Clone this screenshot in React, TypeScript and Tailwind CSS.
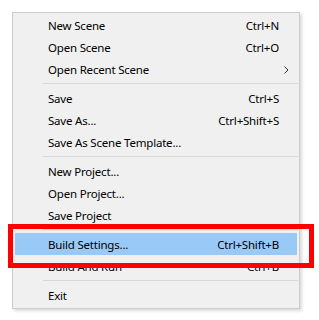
import React from "react";

type Item = { label: string; shortcut?: string; arrow?: boolean; active?: boolean } | "sep";

const items: Item[] = [
  { label: "New Scene", shortcut: "Ctrl+N" },
  { label: "Open Scene", shortcut: "Ctrl+O" },
  { label: "Open Recent Scene", arrow: true },
  "sep",
  { label: "Save", shortcut: "Ctrl+S" },
  { label: "Save As...", shortcut: "Ctrl+Shift+S" },
  { label: "Save As Scene Template..." },
  "sep",
  { label: "New Project..." },
  { label: "Open Project..." },
  { label: "Save Project" },
  "sep",
  { label: "Build Settings...", shortcut: "Ctrl+Shift+B", active: true },
  { label: "Build And Run", shortcut: "Ctrl+B" },
  "sep",
  { label: "Exit" },
];

export default function App() {
  return (
    <div
      className="relative w-[319px] h-[320px] bg-white overflow-hidden"
      style={{ fontFamily: '"Segoe UI", "Noto Sans", sans-serif' }}
    >
      <div className="absolute left-0 top-0 pl-[12px] pt-[12px]">
        <div className="w-[288px] bg-[#f0f0f0] border border-[#cccccc] pt-[1px] pb-[2px] shadow-[2px_2px_3px_rgba(0,0,0,0.15)]">
          {items.map((it, i) =>
            it === "sep" ? (
              <div key={i} className="h-[7px] flex items-center ml-[30px] mr-[1px]">
                <div className="h-px w-full bg-[#d7d7d7]" />
              </div>
            ) : (
              <div
                key={i}
                className={
                  "h-[22px] mx-[2px] flex items-center pl-[33px] pr-[18px] pt-[1px] text-[11.5px] tracking-[-0.2px] text-black " +
                  (it.active ? "bg-[#99c9f7]" : "")
                }
              >
                <span className="flex-1 whitespace-nowrap">{it.label}</span>
                {it.shortcut && <span className="whitespace-nowrap">{it.shortcut}</span>}
                {it.arrow && (
                  <svg width="5" height="8" viewBox="0 0 5 8" className="mr-[-10px]">
                    <path d="M0.5 0.5 L4 4 L0.5 7.5" fill="none" stroke="#333" strokeWidth="1" />
                  </svg>
                )}
              </div>
            )
          )}
        </div>
      </div>
      <div className="absolute left-[8px] top-[224px] w-[306px] h-[44px] border-[5px] border-[#ff0000]" />
    </div>
  );
}
